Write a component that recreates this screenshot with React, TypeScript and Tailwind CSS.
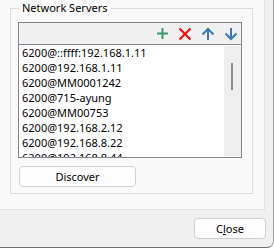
import React from "react";

const rows = [
  "6200@::ffff:192.168.1.11",
  "6200@192.168.1.11",
  "6200@MM0001242",
  "6200@715-ayung",
  "6200@MM00753",
  "6200@192.168.2.12",
  "6200@192.168.8.22",
  "6200@192.168.8.44",
];

export default function App() {
  return (
    <div
      className="w-[274px] h-[248px] bg-[#f0f0f0] border-b border-r border-b-[#6f6f6f] border-r-[#9a9a9a] rounded-br-[7px] overflow-hidden text-black text-[11px]"
      style={{ fontFamily: '"Noto Sans", "Segoe UI", sans-serif' }}
    >
      <div className="w-[265px] h-[210px] bg-[#f9f9f9] border-r border-b border-[#e2e2e2] pt-[8px] pl-[10px]">
        <div className="relative w-[243px] h-[186px] border border-[#dcdcdc] pl-[7px] pt-[13px]">
          <div className="absolute -top-[9px] left-[8px] bg-[#f9f9f9] px-[3px] leading-[16px] text-[11px]">
            Network Servers
          </div>
          <div className="w-[224px] h-[136px] border border-[#828790] flex flex-col">
            <div className="h-[22px] shrink-0 bg-[#f0f0f0] border-b border-[#828790] flex items-center justify-end gap-[9px] pr-[3px]">
              <svg width="13" height="13" viewBox="0 0 13 13">
                <path d="M6.5 1v11M1 6.5h11" stroke="#3a9a6c" strokeWidth="2" />
              </svg>
              <svg width="14" height="14" viewBox="0 0 14 14">
                <path d="M1.5 1.5l11 11M12.5 1.5l-11 11" stroke="#f01010" strokeWidth="2.2" />
              </svg>
              <svg width="14" height="14" viewBox="0 0 14 14">
                <path d="M7 2v11M1.5 7.5L7 2l5.5 5.5" stroke="#3b78b8" strokeWidth="2" fill="none" />
              </svg>
              <svg width="14" height="14" viewBox="0 0 14 14">
                <path d="M7 1v11M1.5 6.5L7 12l5.5-5.5" stroke="#3b78b8" strokeWidth="2" fill="none" />
              </svg>
            </div>
            <div className="flex-1 bg-white flex overflow-hidden">
              <div className="flex-1 pl-[3px] overflow-hidden">
                {rows.map((r) => (
                  <div key={r} className="h-[15px] leading-[15px] whitespace-nowrap">
                    {r}
                  </div>
                ))}
              </div>
              <div className="w-[17px] mt-[1px] mb-[1px] bg-[#eeeeee] relative shrink-0">
                <div className="absolute left-[7px] top-[17px] w-[2px] h-[27px] bg-[#8a8a8a]" />
              </div>
            </div>
          </div>
          <button className="mt-[8px] ml-[1px] w-[117px] h-[21px] rounded-[4px] border border-[#d0d0d0] bg-[#fdfdfd] flex items-center justify-center text-[11px] leading-none">
            Discover
          </button>
        </div>
      </div>
      <div className="pt-[8px] pl-[194px]">
        <button className="w-[72px] h-[21px] rounded-[4px] border border-[#d0d0d0] bg-[#fdfdfd] flex items-center justify-center text-[11px] leading-none">
          C<span className="underline">l</span>ose
        </button>
      </div>
    </div>
  );
}
